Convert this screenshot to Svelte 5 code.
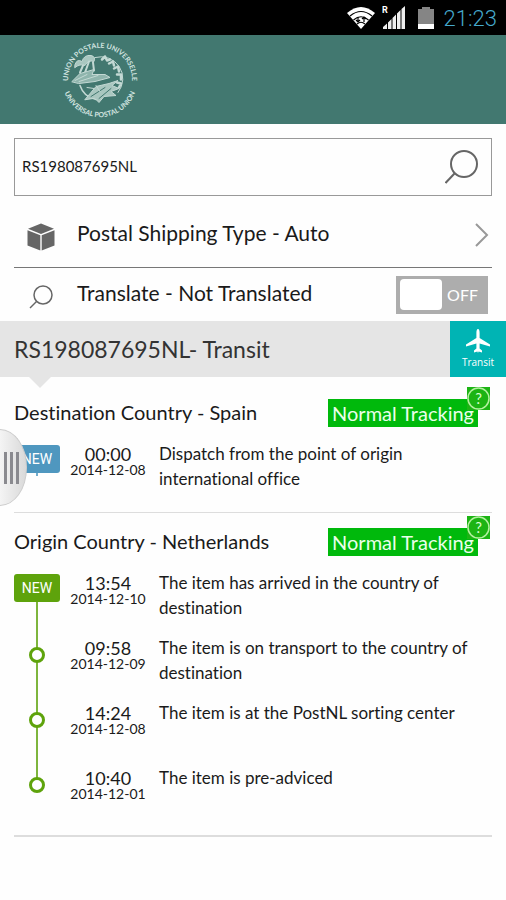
<script>
	let trackingNumber = 'RS198087695NL';
	let translated = false;

	const sections = [
		{
			title: 'Destination Country - Spain',
			tone: 'blue',
			events: [
				{ time: '00:00', date: '2014-12-08', text: 'Dispatch from the point of origin international office' }
			]
		},
		{
			title: 'Origin Country - Netherlands',
			tone: 'green',
			events: [
				{ time: '13:54', date: '2014-12-10', text: 'The item has arrived in the country of destination' },
				{ time: '09:58', date: '2014-12-09', text: 'The item is on transport to the country of destination' },
				{ time: '14:24', date: '2014-12-08', text: 'The item is at the PostNL sorting center' },
				{ time: '10:40', date: '2014-12-01', text: 'The item is pre-adviced' }
			]
		}
	];
</script>

<div class="status-bar">
	<svg class="wifi" viewBox="0 0 28 22" aria-hidden="true">
		<path d="M0 6 Q14 -6 28 6 L14 22 Z" fill="#fff" />
		<path d="M3 9 Q14 0 25 9 M6.500 13 Q14 6.500 21.500 13 M10 17 Q14 13.500 18 17" fill="none" stroke="#000" stroke-width="1.200" />
		<path d="M11 10 v5 M9 13 L11 15 L13 13 M17 15 v-5 M15 12 L17 10 L19 12" fill="none" stroke="#000" stroke-width="1.200" />
	</svg>
	<svg class="signal" viewBox="0 0 24 24" aria-hidden="true">
		<text x="0" y="8" font-size="9" font-weight="700" fill="#fff">R</text>
		<path d="M1 24 V22 L5 18.500 V24 Z M6 24 V17.500 L9.500 14 V24 Z M10.500 24 V13 L14 9.500 V24 Z M15 24 V8.500 L18.500 5 V24 Z M19.500 24 V4 L23 1 V24 Z" fill="#eee" />
	</svg>
	<svg class="battery" viewBox="0 0 16 22" aria-hidden="true">
		<path d="M4 0 H12 V2 H16 V17 H0 V2 H4 Z" fill="#858585" />
		<rect y="17" width="16" height="5" fill="#fff" />
	</svg>
	<span class="clock">21:23</span>
</div>

<header>
	<svg class="logo" viewBox="0 0 80 80" role="img" aria-label="Universal Postal Union">
		<defs>
			<path id="arc-top" d="M9.500 50 A32 32 0 1 1 70.500 50" />
			<path id="arc-bottom" d="M2.800 46 A37.700 37.700 0 0 0 77.200 46" />
		</defs>
		<text><textPath href="#arc-top" startOffset="50%" text-anchor="middle">UNION POSTALE UNIVERSELLE</textPath></text>
		<text><textPath href="#arc-bottom" startOffset="50%" text-anchor="middle">UNIVERSAL POSTAL UNION</textPath></text>
		<g fill="none" stroke="#c3d9d4" stroke-linecap="round" stroke-linejoin="round">
			<path d="M35 18 A22 22 0 0 1 58 53" stroke-width="1" />
			<path d="M20 46 A21 21 0 0 0 36 60" stroke-width="1.500" />
			<path d="M42 20 l3 -3 l2 4 l3 -1 M49 24 l4 -2 l1 4 M54 29 l4 -2 l1 5 M57 35 l4 0 l0 5 M57 43 l4 1 l-2 4" stroke-width="2.500" />
			<path d="M15 25 Q17 19 22 22 Q24 15 31 16 Q36 17 34 22 Q28 20 25 26 Q20 24 15 28 Z" fill="#a9c7c0" stroke-width="1" />
			<path d="M23 26 L20 33 M29 22 L25 33 M33 23 L34 31" stroke-width="2" />
			<path d="M12 42 L20 34 L34 30 L32 35 L45 35 L50 38 L35 42 L19 44 Z" fill="#8fb5ad" stroke-width="1" />
			<path d="M15 41 L27 35 M19 42 L38 36" stroke-width="1" />
			<path d="M25 60 L36 47 L49 44 L58 41 L52 46 L59 49 L51 52 L56 56 L44 57 L39 63 L35 59 Z" fill="#a9c7c0" stroke-width="1" />
			<path d="M31 57 L45 48 M39 59 L51 49" stroke="#427870" stroke-width="1" />
			<path d="M36 46 L40 52 M27 48 L34 49" stroke-width="1" />
		</g>
	</svg>
</header>

<main>
	<form class="search" on:submit|preventDefault>
		<input type="text" aria-label="Tracking number" bind:value={trackingNumber} />
		<button type="submit" aria-label="Search">
			<svg width="34" height="34" viewBox="0 0 34 34" fill="none" stroke="#666" stroke-width="2">
				<circle cx="19" cy="14" r="13" />
				<path d="M9.500 23.500 L0.500 33" />
			</svg>
		</button>
	</form>

	<button class="option shipping" type="button">
		<svg class="icon" width="28" height="28" viewBox="0 0 28 28" fill="#666" aria-hidden="true">
			<path d="M14 0.500 L27 5.800 L14 11 L1 5.800 Z M0.500 7.200 L13.300 12.300 V27.500 L0.500 22.500 Z M27.500 7.200 L14.700 12.300 V27.500 L27.500 22.500 Z" />
		</svg>
		<span class="name">Postal Shipping Type - Auto</span>
		<svg class="chevron" width="14" height="24" viewBox="0 0 14 24" fill="none" stroke="#999" stroke-width="2" aria-hidden="true">
			<path d="M1 1 L12 12 L1 23" />
		</svg>
	</button>

	<label class="option translate">
		<svg class="icon" width="24" height="24" viewBox="0 0 24 24" fill="none" stroke="#666" stroke-width="1.500" aria-hidden="true">
			<circle cx="14" cy="10" r="9" />
			<path d="M7.500 16.500 L1 23" />
		</svg>
		<span class="name">Translate - {translated ? 'Translated' : 'Not Translated'}</span>
		<input type="checkbox" bind:checked={translated} />
		<span class="switch" class:on={translated}>
			<span class="knob"></span>
			<span class="state">{translated ? 'ON' : 'OFF'}</span>
		</span>
	</label>
</main>

<div class="result">
	<h1>{trackingNumber}- Transit</h1>
	<div class="transit">
		<svg width="24" height="24" viewBox="0 0 24 24" fill="#fff" aria-hidden="true">
			<path d="M12 0 C13.200 0 13.600 2 13.600 4 V9 L24 15.500 V17.500 L13.600 14.500 V19.500 L16 21.500 V23.500 L12.600 22.500 L12 24 L11.400 22.500 L8 23.500 V21.500 L10.400 19.500 V14.500 L0 17.500 V15.500 L10.400 9 V4 C10.400 2 10.800 0 12 0 Z" />
		</svg>
		<span>Transit</span>
	</div>
</div>

<div class="details">
	<button class="drawer" type="button" aria-label="Open menu"><i></i><i></i><i></i></button>
	{#each sections as section}
		<section class={section.tone}>
			<div class="heading">
				<h2>{section.title}</h2>
				<div class="tag">
					Normal Tracking
					<button type="button" aria-label="About tracking">
						<svg width="23" height="23" viewBox="0 0 23 23" aria-hidden="true">
							<circle cx="11.500" cy="11.500" r="10.500" fill="none" stroke="#b4f0a0" stroke-width="1.500" />
							<text x="11.500" y="17" text-anchor="middle" font-size="15" fill="#d8ffd0">?</text>
						</svg>
					</button>
				</div>
			</div>
			<ol>
				{#each section.events as event, i}
					<li>
						<div class="marker">
							{#if i === 0}
								<span class="new">NEW</span>
							{:else}
								<span class="dot"></span>
							{/if}
						</div>
						<div class="when">
							<span class="time">{event.time}</span>
							<span class="date">{event.date}</span>
						</div>
						<p>{event.text}</p>
					</li>
				{/each}
			</ol>
		</section>
	{/each}
</div>

<style>
	:global(body) {
		background: #fefefe;
		color: #1a1a1a;
		font-family: Lato, 'Liberation Sans', sans-serif;
		font-variant-ligatures: none;
	}

	button {
		padding: 0;
		border: 0;
		background: none;
		color: inherit;
		font: inherit;
	}

	svg {
		display: block;
		flex: none;
	}

	.status-bar {
		display: flex;
		align-items: center;
		justify-content: flex-end;
		height: 35px;
		padding-right: 9px;
		background: #000;
		font-family: Roboto, sans-serif;
	}

	.wifi {
		width: 28px;
		height: 22px;
		margin-right: 7px;
	}

	.signal {
		width: 24px;
		height: 24px;
		margin: 0 12px 2px 0;
	}

	.battery {
		width: 16px;
		height: 22px;
		margin-right: 10px;
	}

	.clock {
		padding-top: 2px;
		color: #45a9cc;
		font-size: 22px;
		font-weight: 300;
	}

	header {
		height: 89px;
		padding-left: 60px;
		background: #427870;
	}

	.logo {
		width: 80px;
		height: 89px;
	}

	.logo text {
		fill: #d3e5e0;
		font-size: 7px;
		font-weight: 700;
	}

	main {
		padding: 14px 14px 0;
	}

	.search {
		display: flex;
		align-items: center;
		height: 56px;
		padding: 0 12px 0 7px;
		border: 1px solid #999;
	}

	.search input {
		flex: 1;
		min-width: 0;
		padding: 0 0 3px;
		border: 0;
		outline: 0;
		background: none;
		color: inherit;
		font: 15px Lato, sans-serif;
	}

	.option {
		display: flex;
		align-items: center;
		box-sizing: border-box;
		width: 100%;
		font-size: 21px;
		text-align: left;
	}

	.option .icon {
		width: 28px;
		margin: 4px 22px 0 13px;
	}

	.option .name {
		flex: 1;
		padding-bottom: 5px;
	}

	.shipping {
		height: 72px;
		padding: 6px 3px 0 0;
		border-bottom: 1px solid #777;
	}

	.translate {
		position: relative;
		height: 53px;
		padding-right: 4px;
	}

	.translate input {
		position: absolute;
		right: 4px;
		width: 92px;
		height: 38px;
		margin: 0;
		opacity: 0;
	}

	.switch {
		display: flex;
		align-items: center;
		justify-content: space-between;
		box-sizing: border-box;
		width: 92px;
		height: 38px;
		padding: 0 10px 0 4px;
		background: #adadad;
		color: #fff;
		font-size: 16px;
	}

	.switch.on {
		background: #00b6b4;
	}

	.knob {
		width: 42px;
		height: 31px;
		border-radius: 4px;
		background: #fff;
	}

	.result {
		position: relative;
		display: flex;
		align-items: center;
		justify-content: space-between;
		height: 56px;
		padding-left: 14px;
		background: #e5e5e5;
	}

	.result::after {
		content: '';
		position: absolute;
		top: 100%;
		left: 29px;
		border: 11px solid transparent;
		border-top-color: #e5e5e5;
		border-bottom: 0;
	}

	h1 {
		margin: 0;
		color: #333;
		font-size: 23px;
		font-weight: 400;
	}

	.transit {
		display: flex;
		flex-direction: column;
		align-items: center;
		justify-content: center;
		gap: 2px;
		width: 56px;
		height: 56px;
		background: #00b4b4;
		color: #fff;
		font: 10px/14px 'Open Sans', sans-serif;
	}

	.details {
		position: relative;
		padding: 7px 14px 0;
	}

	section {
		padding: 15px 0 6px;
		border-bottom: 1px solid #ddd;
	}

	section:last-child {
		padding-bottom: 5px;
		border-bottom-width: 2px;
	}

	.blue {
		--tone: #4f97bf;
	}

	.green {
		--tone: #5ea30c;
	}

	.heading {
		display: flex;
		align-items: center;
		justify-content: space-between;
		height: 28px;
		padding-right: 14px;
		margin-bottom: 14px;
	}

	h2 {
		margin: 0;
		padding-bottom: 2px;
		font-size: 20px;
		font-weight: 400;
	}

	.tag {
		position: relative;
		padding: 0 4px;
		background: #00b90c;
		color: #eaffea;
		font-size: 20px;
		line-height: 28px;
	}

	.tag button {
		position: absolute;
		top: -12px;
		right: -12px;
		background: #1cb414;
	}

	ol {
		margin: 0;
		padding: 0;
		list-style: none;
	}

	li {
		display: flex;
		min-height: 65px;
	}

	.marker {
		position: relative;
		flex: none;
		display: flex;
		justify-content: center;
		align-items: flex-start;
		width: 46px;
	}

	.marker::before {
		content: '';
		position: absolute;
		top: 4px;
		bottom: 0;
		left: 22px;
		width: 2px;
		background: var(--tone);
		opacity: 0.8;
	}

	li:not(:first-child) .marker::before {
		top: 0;
	}

	li:last-child .marker::before {
		bottom: auto;
		height: 20px;
	}

	li:only-child .marker::before {
		height: 31px;
	}

	.new {
		position: relative;
		width: 100%;
		margin-top: 4px;
		border-radius: 3px;
		background: var(--tone);
		color: #fff;
		font: 14px/28px Roboto, sans-serif;
		text-align: center;
	}

	.dot {
		position: relative;
		box-sizing: border-box;
		width: 16px;
		height: 16px;
		margin-top: 12px;
		border: 3px solid var(--tone);
		border-radius: 50%;
		background: #fff;
	}

	.when {
		flex: none;
		display: flex;
		flex-direction: column;
		align-items: center;
		width: 76px;
		padding: 4px 13px 0 10px;
	}

	.time {
		font-size: 18px;
		line-height: 18px;
	}

	.date {
		font-size: 14px;
		line-height: 14px;
	}

	li p {
		margin: 0;
		font-size: 17px;
		line-height: 25px;
	}

	.drawer {
		position: absolute;
		z-index: 1;
		top: 52px;
		left: 0;
		display: flex;
		align-items: center;
		gap: 3px;
		width: 27px;
		height: 77px;
		padding-left: 4px;
		border: 1px solid #ccc;
		border-left: 0;
		border-radius: 0 27px 27px 0 / 0 38px 38px 0;
		background: linear-gradient(90deg, #f4f4f4, #d9d9d9);
	}

	.drawer i {
		width: 3px;
		height: 32px;
		background: #8a8a8f;
	}
</style>
